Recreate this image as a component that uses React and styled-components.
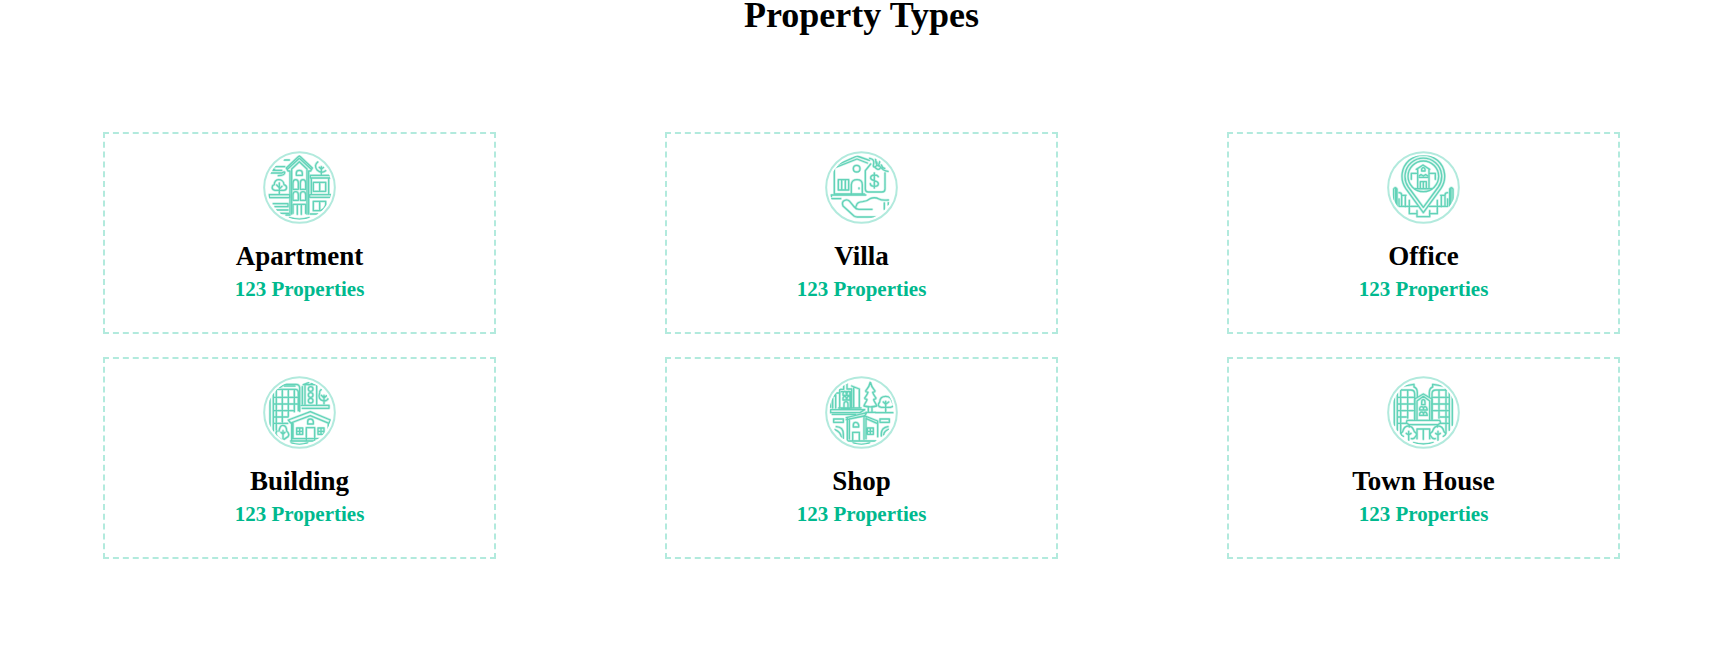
import React from "react";
import styled, { createGlobalStyle } from "styled-components";

const GlobalStyle = createGlobalStyle`
  * { box-sizing: border-box; }
  body {
    margin: 0;
    background: #fff;
    color: #000;
    font-family: "Liberation Serif", "Times New Roman", serif;
  }
`;

const Section = styled.section`
  padding: 0 98px 92px 103px;
`;

const Heading = styled.h1`
  margin: 0 0 102px;
  font-size: 36px;
  line-height: 30px;
  text-align: center;
`;

const Grid = styled.div`
  display: grid;
  grid-template-columns: repeat(3, minmax(0, 1fr));
  column-gap: 169px;
  row-gap: 23px;
`;

const Card = styled.article`
  display: flex;
  flex-direction: column;
  align-items: center;
  padding: 17px 16px 31px;
  border: 2px dashed #b2eadd;
  text-align: center;
`;

const Icon = styled.svg`
  display: block;
  width: 73px;
  height: 73px;
  fill: none;
  stroke-linecap: round;
  stroke-linejoin: round;
`;

const Ring = styled.circle`
  stroke: #b2eadd;
  stroke-width: 6;
`;

const Shade = styled.g`
  stroke: #ccf1e8;
  stroke-width: 8;
`;

const Lines = styled.g`
  stroke: #62d3b8;
  stroke-width: 4;
`;

const Name = styled.h2`
  margin: 17px 0 6px;
  font-size: 27px;
  line-height: 30px;
`;

const Count = styled.p`
  margin: 0;
  color: #00b98e;
  font-size: 21px;
  font-weight: bold;
  line-height: 24px;
`;

const Apartment = () => (
  <>
    <path d="M105 207V78h-6l-5-9 39-37 39 37-5 9h-6v129M110 207V72l23-22 23 22v135M98 72l35-32 35 32" />
    <path d="M124 91v-7q0-8 9-8t9 8v7zM114 133v-19q0-10 8-10t8 10v19zM136 133v-19q0-10 8-10t8 10v19zM114 166v-17q0-9 8-9t8 9v17zM136 166v-17q0-9 8-9t8 9v17z" />
    <path d="M114 205v-27h38v27M127 178v30M139 178v30M104 218q29 9 58 0" />
    <path d="M43 149h61v9H43zM55 176h44v9H60M65 195h34M76 205h25M93 210h12" />
    <path d="M73 148v-34M73 128l-8-8M73 132l8-8M60 136c-12-3-10-15-2-17-2-20 28-20 29 0 10 3 11 15-1 17z" />
    <path d="M166 91h60v8h-60zM169 99v47M221 99v47M175 112h37v27h-37zM194 112v27M164 149h64v8h-64zM175 169h37v12q-4 12-15 16h-22zM194 169v28M166 207h22" />
    <path d="M61 65h28M54 76h26M61 65q-16 5-2 8M48 84h33q9-7 8 0t-19 8M88 45h15M189 50q-14 11-2 26 12 11 25 1M199 90V65M193 67l6 6 7-6" />
  </>
);

const Villa = () => (
  <>
    <path d="M52 72v75h90M49 65l71-32 37 13M48 78q0-8 8-11l64-25 31 12" />
    <circle cx="119" cy="71" r="10" />
    <path d="M64 104h31v31H64zM74 104v31M85 104v31M103 148v-29q1-15 17-15t16 15v29M126 129v2M43 150h103M43 161h28M43 150v5" />
    <path d="M154 141q-9 0-9-9V77l16-20M204 84v48q0 9-9 9h-41M184 95q-2-5-11-5-12 0-12 9c0 10 23 6 23 17 0 10-23 11-24 0M172 84v45" />
    <path d="M158 40q15 3 12 16t5 9 4-14M176 42q0 18 8 21 4-11 6-20M173 66q11 12 16 4M186 61q12 17 27 18M193 60q3 9 10 10" />
    <path d="M117 186h-5l-14-17q-7-7-15-3-10 4-5 17l33 30q5 3 10 3h60M112 186q5 7 14 7h39M118 182q2-11 19-12 12-1 22-9 14-6 27 1 8 5 28 3M202 174v19M214 173v7" />
  </>
);

const Office = () => (
  <>
    <path d="M133 203L80 130A64 64 0 1 1 186 130ZM133 187L88 126A55 55 0 1 1 178 126Z" />
    <circle cx="133" cy="94" r="46" />
    <path d="M112 73l20-13 20 13M116 73v58h34V73M97 103V85h16M153 85h16v18" />
    <path d="M128 78v-6q5-9 10 0v6zM120 97h27M120 93l6-4 7 4 7-4 7 4M124 131v-21h18v21M133 112v18M108 131h50" />
    <path d="M44 170v-38q5-8 10 0v52M50 130v48M68 183v-32q0-8-8-8M68 151h13M79 154v31M60 162v22M60 184h56M91 166v40M91 206h23M114 197v18h38v-18" />
    <path d="M222 170v-38q-5-8-10 0v52M216 130v48M198 183v-32q0-8 8-8M198 151h-13M187 154v31M206 162v22M206 184h-56M175 166v40M175 206h-23" />
  </>
);

const Building = () => (
  <>
    <path d="M45 178V62h10v-10h21l12-9h35q10 0 11 10v71M55 64v119M60 58h61q9 0 9 9v55M64 59v121M82 59v97M100 59v80M118 59v66M56 82h73M56 102h71M56 122h60M56 141h43M56 160h42M88 48h32" />
    <path d="M142 102V50M150 103V44h35v60M145 44l16-6M162 45l15-8M185 45v22M138 106h84v9h-80" />
    <circle cx="167" cy="57" r="7" />
    <circle cx="167" cy="75" r="7" />
    <circle cx="167" cy="92" r="7" />
    <path d="M207 102V76M199 76l8 8 9-8M194 68q-7 22 13 25 9 0 14-9M194 64l5-6" />
    <path d="M107 159l-7-9 66-25 60 25-4 10-56-23zM110 159v51M114 158v48h94M220 161v33M158 162v-7q0-8 8-8t9 8v7zM154 209v-36h25v36M107 213h86" />
    <path d="M125 174h18v19h-18zM134 174v19M125 184h18M189 174h18v19h-18zM198 174v19M189 184h18M66 183q-7 8 1 17l13 11M72 183q3-18 12-17 11 1 11 17 10 8 4 17l-12 8M84 206v-24M78 187l6 6 6-6M108 219q25 9 50 0" />
  </>
);

const Shop = () => (
  <>
    <path d="M41 112V78h12v-9h16M47 82v32M56 74v40M68 115V58h12V43l10-6v20h14v58M104 48l23 9v57M110 54v60M73 65h27v50H73M65 114h67" />
    <path d="M78 72q0-8 5-8t5 8v4H78zM90 72q0-8 5-8t4 8v4h-9zM78 86q0-7 5-7t5 7v4H78zM90 86q0-7 5-7t4 7v4h-9zM81 115v-13q0-7 6-7t6 7v13" />
    <path d="M160 36c-4 17-10 21-14 27 0 4 7 3 7 4-3 9-7 13-10 17 0 5 7 3 7 5-3 9-7 11-9 19q19 5 38 0c-2-8-6-10-9-19 0-2 7 0 7-5-3-4-7-8-10-17 0-1 7 0 7-4-4-6-10-10-14-27zM154 110v16M165 110v16M206 126V94M199 96l7 7 9-7M193 112q-15-3-5-16 1-17 18-17t20 17q11 13-6 16z" />
    <path d="M41 119h102l-14 9H41zM176 128h52M147 127h29M46 133h70M50 147h29v10H50zM189 147h28v10h-28z" />
    <path d="M88 143l61-15-8 13M91 144v65M97 147v60M88 149l53-11M141 137v71M147 143v63M182 157v43M141 137l41 16v8l-34-15M109 171v-6q0-8 7-8t9 8v6zM107 209v-22h20v22M151 174h18v19h-18zM160 174v19M151 184h18M92 213h84" />
    <path d="M58 170q21 1 21 22v13M54 179q17 7 19 22M213 170q-19 3-20 20v8M215 178q-13 4-15 16M108 219q25 9 50 0" />
  </>
);

const TownHouse = () => (
  <>
    <path d="M55 181V57h11v-8l39-6v8q10 3 10 17v12M46 78v88M65 61v129M86 61v83M59 60h36q12 0 12 11v76" />
    <path d="M211 181V57h-11v-8l-39-6v8q-10 3-10 17v12M220 78v88M201 61v129M180 61v83M207 60h-36q-12 0-12 11v76" />
    <path d="M56 82h51M56 102h51M56 122h51M56 141h26M210 82h-51M210 102h-51M210 122h-51M210 141h-26M56 160h28M210 160h-28" />
    <path d="M107 150V87l26-15 26 15v63M114 149V93l19-14 19 14v56M128 104v-7q0-8 5-8t5 8v7zM122 120q-1-10 6-10t5 10zM133 120q0-10 5-10t7 10zM122 136q-1-10 6-10t5 10zM133 136q0-10 5-10t7 10z" />
    <path d="M84 151h98l3 8-8 5H90l-8-5zM91 165v6M175 165v6M114 206v-29h38v29M133 178v30M104 218q29 8 58 0" />
    <path d="M89 211v-27M82 190l7 5 7-5M73 199q-13-7-2-14 4-17 17-17t18 17q11 7 4 14-4 9-13 7M177 211v-27M170 190l7 5 7-5M193 199q13-7 2-14-4-17-17-17t-18 17q-11 7-4 14 4 9 13 7" />
  </>
);

const properties = [
  { id: "apartment", name: "Apartment", Drawing: Apartment },
  { id: "villa", name: "Villa", Drawing: Villa },
  { id: "office", name: "Office", Drawing: Office },
  { id: "building", name: "Building", Drawing: Building },
  { id: "shop", name: "Shop", Drawing: Shop },
  { id: "town-house", name: "Town House", Drawing: TownHouse },
];

export default function App() {
  return (
    <>
      <GlobalStyle />
      <Section>
        <Heading>Property Types</Heading>
        <Grid>
          {properties.map(({ id, name, Drawing }) => (
            <Card key={id}>
              <Icon viewBox="24 18 219 219" aria-hidden="true">
                <clipPath id={`${id}-disc`}>
                  <circle cx="133.5" cy="127.5" r="97" />
                </clipPath>
                <Ring cx="133.5" cy="127.5" r="106" />
                <g clipPath={`url(#${id}-disc)`}>
                  <Shade><Drawing /></Shade>
                  <Lines><Drawing /></Lines>
                </g>
              </Icon>
              <Name>{name}</Name>
              <Count>123 Properties</Count>
            </Card>
          ))}
        </Grid>
      </Section>
    </>
  );
}
